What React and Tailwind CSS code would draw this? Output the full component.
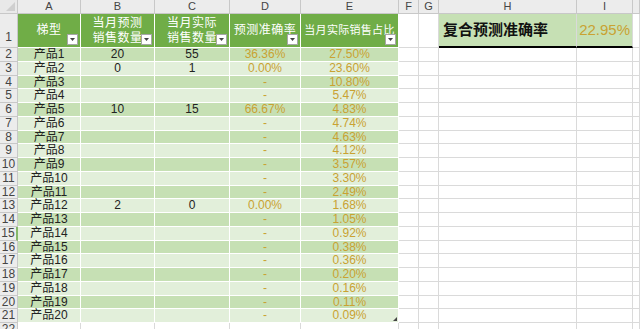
import React from 'react'

const cols = ['A', 'B', 'C', 'D', 'E', 'F', 'G', 'H', 'I', '']

const rows = [
  ['产品1', '20', '55', '36.36%', '27.50%'],
  ['产品2', '0', '1', '0.00%', '23.60%'],
  ['产品3', '', '', '-', '10.80%'],
  ['产品4', '', '', '-', '5.47%'],
  ['产品5', '10', '15', '66.67%', '4.83%'],
  ['产品6', '', '', '-', '4.74%'],
  ['产品7', '', '', '-', '4.63%'],
  ['产品8', '', '', '-', '4.12%'],
  ['产品9', '', '', '-', '3.57%'],
  ['产品10', '', '', '-', '3.30%'],
  ['产品11', '', '', '-', '2.49%'],
  ['产品12', '2', '0', '0.00%', '1.68%'],
  ['产品13', '', '', '-', '1.05%'],
  ['产品14', '', '', '-', '0.92%'],
  ['产品15', '', '', '-', '0.38%'],
  ['产品16', '', '', '-', '0.36%'],
  ['产品17', '', '', '-', '0.20%'],
  ['产品18', '', '', '-', '0.16%'],
  ['产品19', '', '', '-', '0.11%'],
  ['产品20', '', '', '-', '0.09%'],
]

const FilterBtn = () => (
  <span className="absolute right-[2px] bottom-[2px] w-[11px] h-[11px] bg-white border border-[#a6a6a6] flex items-center justify-center">
    <svg width="5" height="3" viewBox="0 0 5 3">
      <path d="M0 0h5L2.5 3z" fill="#444" />
    </svg>
  </span>
)

const Header = ({ lines }) => (
  <div className="relative bg-[#70ad47] border-r border-b border-white text-white text-[12px] leading-[15px] flex flex-col items-center justify-center whitespace-nowrap">
    {lines.map((l) => (
      <span key={l} className="tracking-[0.5px]">{l}</span>
    ))}
    <FilterBtn />
  </div>
)

const Plain = ({ children, className = '' }) => (
  <div className={`border-r border-b border-[#dadada] bg-white ${className}`}>{children}</div>
)

export default function App() {
  return (
    <div
      className="w-[640px] h-[329px] overflow-hidden bg-white text-[#222]"
      style={{ fontFamily: '"Liberation Sans", "Noto Sans CJK SC", sans-serif' }}
    >
      <div className="grid grid-cols-[18px_63px_74px_75px_71px_98px_20px_20px_138px_56px_7px] grid-rows-[14px_34px_repeat(21,13.75px)]">
        {/* column letters */}
        <div className="bg-[#e9e9e9] border-r border-b border-[#c8c8c8] relative">
          <svg className="absolute right-[2px] bottom-[2px]" width="9" height="9" viewBox="0 0 9 9">
            <path d="M9 0v9H0z" fill="#cfcfcf" />
          </svg>
        </div>
        {cols.map((c, i) => (
          <div
            key={i}
            className="bg-[#ececec] border-r border-b border-[#c8c8c8] text-[11px] leading-[13px] text-[#444] text-center"
          >
            {c}
          </div>
        ))}

        {/* row 1 */}
        <div className="bg-[#ececec] border-r border-b border-[#c8c8c8] text-[12px] text-[#444] flex items-end justify-center pb-[1px]">1</div>
        <Header lines={['梯型']} />
        <Header lines={['当月预测', '销售数量']} />
        <Header lines={['当月实际', '销售数量']} />
        <Header lines={['预测准确率']} />
        <div className="relative bg-[#70ad47] border-r border-b border-white text-white text-[11px] leading-[15px] flex items-center justify-center whitespace-nowrap">
          <span className="tracking-[0.3px]">当月实际销售占比</span>
          <FilterBtn />
        </div>
        <Plain />
        <Plain />
        <div className="bg-[#c6e0b4] border-r border-r-[#dadada] border-b-2 border-b-black flex items-center pl-[4px] text-[15px] font-bold text-[#111] whitespace-nowrap">
          复合预测准确率
        </div>
        <div className="bg-[#c6e0b4] border-r border-r-[#dadada] border-b-2 border-b-black flex items-center justify-end pr-[2px] text-[15px] text-[#c9a232]">
          22.95%
        </div>
        <Plain />

        {rows.map((r, i) => {
          const band = i % 2 === 0 ? 'bg-[#c6e0b4]' : 'bg-[#e2efda]'
          const cell = `${band} border-r border-b border-white text-center text-[12px] leading-[13px] whitespace-nowrap`
          return (
            <React.Fragment key={i}>
              <div
                className={`bg-[#ececec] border-b border-[#c8c8c8] text-[12px] leading-[13px] text-[#444] text-center ${
                  i === 13 ? 'border-r-2 border-r-[#86b86a]' : 'border-r'
                }`}
              >
                {i + 2}
              </div>
              <div className={cell}>{r[0]}</div>
              <div className={cell}>{r[1]}</div>
              <div className={cell}>{r[2]}</div>
              <div className={`${cell} text-[#c9a232]`}>{r[3]}</div>
              <div className={`${cell} text-[#c9a232] relative`}>
                {r[4]}
                {i === rows.length - 1 && (
                  <svg className="absolute right-[1px] bottom-[1px]" width="4" height="4" viewBox="0 0 4 4">
                    <path d="M4 0v4H0z" fill="#444" />
                  </svg>
                )}
              </div>
              <Plain />
              <Plain />
              <Plain />
              <Plain />
              <Plain />
            </React.Fragment>
          )
        })}

        {/* row 22 partial */}
        <div className="bg-[#ececec] border-r border-b border-[#c8c8c8] text-[12px] leading-[13px] text-[#444] text-center">22</div>
        {cols.map((c, i) => (
          <Plain key={i} />
        ))}
      </div>
    </div>
  )
}
